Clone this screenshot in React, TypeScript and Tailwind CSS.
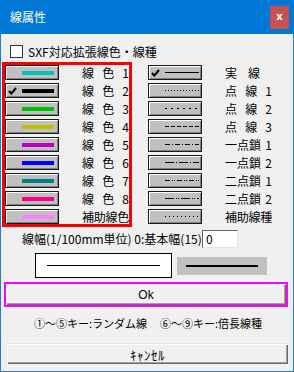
import React from "react";

const FONT = { fontFamily: '"Noto Sans CJK JP", "Noto Sans", sans-serif' };

const leftRows: { color: string; parts: string[]; checked?: boolean }[] = [
  { color: "#00c0c0", parts: ["線", "色", "1"] },
  { color: "#000000", parts: ["線", "色", "2"], checked: true },
  { color: "#00c000", parts: ["線", "色", "3"] },
  { color: "#c0c000", parts: ["線", "色", "4"] },
  { color: "#c000c0", parts: ["線", "色", "5"] },
  { color: "#0000ff", parts: ["線", "色", "6"] },
  { color: "#008080", parts: ["線", "色", "7"] },
  { color: "#ff0080", parts: ["線", "色", "8"] },
  { color: "#ff80ff", parts: ["補助線色"] },
];

const rightRows: { dash: string | null; parts: string[]; checked?: boolean; narrow?: boolean }[] = [
  { dash: null, parts: ["実", "線"], checked: true, narrow: true },
  { dash: "1 2", parts: ["点", "線", "1"] },
  { dash: "2 4", parts: ["点", "線", "2"] },
  { dash: "4 2", parts: ["点", "線", "3"] },
  { dash: "5 2 1 2", parts: ["一点鎖", "1"] },
  { dash: "9 2 1 2", parts: ["一点鎖", "2"] },
  { dash: "5 2 1 1 1 2", parts: ["二点鎖", "1"] },
  { dash: "9 2 1 1 1 2", parts: ["二点鎖", "2"] },
  { dash: "1 3", parts: ["補助線種"] },
];

function Check() {
  return (
    <svg width="9" height="8" viewBox="0 0 9 8" className="block">
      <path d="M1 4 L3.3 6.6 L8 1" fill="none" stroke="#000" strokeWidth="2" />
    </svg>
  );
}

function SmallButton({ checked, children }: { checked?: boolean; children: React.ReactNode }) {
  return (
    <div className="w-[54px] h-[15px] shrink-0 bg-[#c0c0c0] border border-[#1a1a1a] shadow-[inset_1px_1px_0_#ffffff,inset_-1px_-1px_0_#808080] flex items-center">
      <div className="w-[15px] shrink-0 flex items-center pl-[2px]">{checked ? <Check /> : null}</div>
      {children}
    </div>
  );
}

function Label({ parts, narrow }: { parts: string[]; narrow?: boolean }) {
  return (
    <div
      className={`${narrow ? "w-[35px]" : "w-[47px]"} flex justify-between whitespace-nowrap text-[12px] leading-[15px] text-black`}
    >
      {parts.map((p, i) => (
        <span key={i} className={parts.length === 1 ? "tracking-[-0.25px]" : ""}>
          {p}
        </span>
      ))}
    </div>
  );
}

export default function App() {
  return (
    <div
      className="w-[294px] h-[372px] bg-[#f0f0f0] border-x border-b border-[#1c7fd6] flex flex-col text-black"
      style={FONT}
    >
      {/* Title bar */}
      <div className="h-[34px] -mx-px bg-[#0078d7] flex items-center pl-[10px] pr-[5px] shrink-0">
        <span className="text-white text-[12px] leading-none">線属性</span>
        <div className="ml-auto w-[19px] h-[23px] bg-[#c75050] flex items-center justify-center">
          <span className="text-white text-[10px] font-bold leading-none" style={{ fontFamily: '"DejaVu Sans", sans-serif' }}>
            x
          </span>
        </div>
      </div>

      {/* Checkbox row */}
      <div className="flex items-center mt-[11px] pl-[9px] h-[13px]">
        <div className="w-[13px] h-[13px] bg-white border border-[#333333]" />
        <span className="ml-[5px] text-[12px] leading-none whitespace-nowrap">SXF対応拡張線色・線種</span>
      </div>

      {/* Main two columns */}
      <div className="flex mt-[4px] ml-[1px]">
        <div className="w-[130px] border-[3px] border-[#ff0000] flex flex-col gap-[3px]">
          {leftRows.map((r, i) => (
            <div key={i} className="flex items-center h-[15px]">
              <SmallButton checked={r.checked}>
                <div className="w-[32px] h-[4px] ml-px" style={{ backgroundColor: r.color }} />
              </SmallButton>
              <div className="ml-[23px]">
                <Label parts={r.parts} />
              </div>
            </div>
          ))}
        </div>
        <div className="ml-[16px] pt-[3px] flex flex-col gap-[3px]">
          {rightRows.map((r, i) => (
            <div key={i} className="flex items-center h-[15px]">
              <SmallButton checked={r.checked}>
                <svg width="34" height="3" className="block ml-px" shapeRendering="crispEdges">
                  <line
                    x1="0"
                    y1="1.5"
                    x2="34"
                    y2="1.5"
                    stroke="#000"
                    strokeWidth="1"
                    strokeDasharray={r.dash ?? undefined}
                  />
                </svg>
              </SmallButton>
              <div className="ml-[23px]">
                <Label parts={r.parts} narrow={r.narrow} />
              </div>
            </div>
          ))}
        </div>
      </div>

      {/* Line width row */}
      <div className="flex items-center mt-[3px] ml-[21px] h-[18px]">
        <span className="text-[12px] leading-none whitespace-nowrap">線幅(1/100mm単位) 0:基本幅(15)</span>
        <div className="ml-auto mr-[55px] w-[36px] h-[18px] bg-white border border-t-[#646464] border-l-[#646464] border-b-[#e3e3e3] border-r-[#e3e3e3] flex items-center pl-[3px]">
          <span className="text-[12px] leading-none">0</span>
        </div>
      </div>

      {/* Preview row */}
      <div className="flex items-center mt-[5px] ml-[34px] h-[25px]">
        <div className="w-[137px] h-[25px] bg-white border border-black flex items-center justify-center">
          <div className="w-[113px] h-px bg-black" />
        </div>
        <div className="ml-[5px] w-[90px] h-[18px] bg-[#c0c0c0] flex items-center justify-center">
          <div className="w-[72px] h-[2px] bg-black" />
        </div>
      </div>

      {/* Ok button */}
      <div className="mt-[4px] ml-[3px] mr-[5px] h-[25px] border-2 border-[#ff00ff]">
        <div className="w-full h-full bg-[#f0f0f0] shadow-[inset_1px_1px_0_#ffffff,inset_-1px_-1px_0_#696969,inset_-2px_-2px_0_#a0a0a0] flex items-center justify-center">
          <span className="text-[12px] leading-none" style={{ fontFamily: '"Liberation Sans", sans-serif' }}>
            Ok
          </span>
        </div>
      </div>

      {/* Help text */}
      <div className="mt-[8px] h-[16px] flex items-center justify-center text-[11px] leading-none ml-[2px] whitespace-nowrap">
        <span>①～⑤キー:ランダム線</span>
        <span className="ml-[13px]">⑥～⑨キー:倍長線種</span>
      </div>

      {/* Cancel */}
      <div className="mt-[12px] ml-[5px] mr-[5px] h-[21px] bg-[#f0f0f0] border-t border-l border-[#e3e3e3] shadow-[inset_1px_1px_0_#ffffff,inset_-1px_-1px_0_#696969,inset_-2px_-2px_0_#a0a0a0] flex items-center justify-center">
        <span className="text-[13px] leading-none tracking-[0.5px]">ｷｬﾝｾﾙ</span>
      </div>
    </div>
  );
}
